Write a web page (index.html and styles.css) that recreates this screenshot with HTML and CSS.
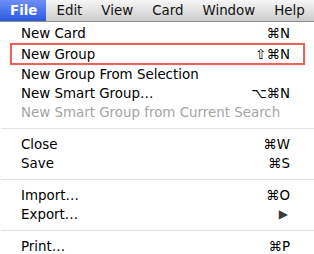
FILE: index.html
```html
<!DOCTYPE html>
<html>
<head>
<meta charset="utf-8">
<link rel="stylesheet" href="styles.css">
</head>
<body>
<div class="menubar">
  <div class="title active">File</div>
  <div class="title">Edit</div>
  <div class="title">View</div>
  <div class="title">Card</div>
  <div class="title">Window</div>
  <div class="title">Help</div>
</div>
<div class="menu">
  <div class="item"><span>New Card</span><span class="key">⌘N</span></div>
  <div class="item boxed"><span>New Group</span><span class="key">⇧⌘N</span></div>
  <div class="item"><span>New Group From Selection</span></div>
  <div class="item"><span>New Smart Group…</span><span class="key">⌥⌘N</span></div>
  <div class="item disabled"><span>New Smart Group from Current Search</span></div>
  <div class="sep"></div>
  <div class="item"><span>Close</span><span class="key">⌘W</span></div>
  <div class="item"><span>Save</span><span class="key">⌘S</span></div>
  <div class="sep"></div>
  <div class="item"><span>Import…</span><span class="key">⌘O</span></div>
  <div class="item"><span>Export…</span><span class="key arrow">▶</span></div>
  <div class="sep"></div>
  <div class="item"><span>Print…</span><span class="key">⌘P</span></div>
</div>
</body>
</html>
```
FILE: styles.css
```css
html, body {
  margin: 0;
  padding: 0;
  background: #fff;
  width: 314px;
  height: 254px;
  overflow: hidden;
}
body {
  font-family: "DejaVu Sans", "Noto Sans", sans-serif;
  font-size: 13.4px;
  color: #000;
  white-space: nowrap;
}
.menubar {
  display: flex;
  height: 21px;
  background: linear-gradient(#f6f6f6, #cdcdcd);
  border-bottom: 1px solid #8e8e8e;
  align-items: stretch;
}
.title {
  display: flex;
  align-items: center;
  padding: 0 9px 1px 10px;
  font-size: 13.4px;
  color: #111;
}
.title.active {
  background: linear-gradient(#6d8ff6, #2b58e4);
  color: #fff;
  font-weight: bold;
  padding: 0 9px 1px 10px;
}
.menu {
  display: flex;
  flex-direction: column;
  padding-top: 2px;
}
.item {
  height: 19px;
  display: flex;
  align-items: center;
  justify-content: space-between;
  padding: 0 24px 0 21px;
  font-size: 13.4px;
  line-height: 19px;
}
.item.boxed {
  margin: 0 9px 0 10px;
  padding: 0 13px 0 9px;
  border: 2px solid #e9645c;
  box-shadow: 0 0 1px rgba(233, 100, 92, 0.6);
  height: 18px;
}
.item.disabled {
  color: #a4a4a4;
}
.arrow {
  font-size: 12px;
  color: #3a3a3a;
  margin-right: 2px;
}
.sep {
  height: 13px;
  display: flex;
  align-items: center;
}
.sep::before {
  content: "";
  flex: 1;
  height: 1px;
  background: #e2e2e2;
  margin: 0 0 0 1px;
}
```
